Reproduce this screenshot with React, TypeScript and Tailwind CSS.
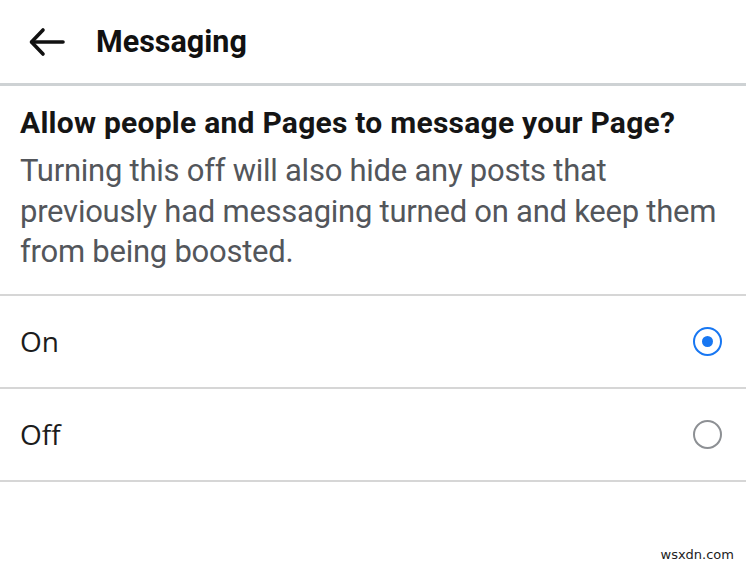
import { useState } from 'react';

const options = [
    { id: 'on', label: 'On' },
    { id: 'off', label: 'Off' },
];

const Radio = ({ checked }: { checked: boolean }) => (
    <span
        className={`w-[29px] h-[29px] rounded-full flex items-center justify-center border-2 ${checked ? 'border-[#1877f2]' : 'border-[#8d9094]'}`}
    >
        {checked && <span className="w-[11px] h-[11px] rounded-full bg-[#1877f2]" />}
    </span>
);

export default function App() {
    const [value, setValue] = useState('on');

    return (
        <div className="w-[746px] h-[570px] bg-white relative overflow-hidden font-['Roboto',sans-serif]">
            {/* Top bar */}
            <header className="h-[86px] flex items-center border-b-[3px] border-[#ced2d4]">
                <button className="ml-[26px] w-[42px] h-[42px] flex items-center justify-center text-[#111]">
                    <svg width="38" height="30" viewBox="0 0 38 30" fill="none" stroke="currentColor" strokeWidth="3.6" strokeLinecap="round" strokeLinejoin="round">
                        <path d="M35 15H4" />
                        <path d="M15 3L3.5 15 15 27" />
                    </svg>
                </button>
                <h1 className="ml-[28px] text-[30.5px] font-bold text-[#111]">Messaging</h1>
            </header>

            {/* Explainer */}
            <section className="px-5 pt-[19px] pb-[21px] border-b-2 border-[#d6d6d6]">
                <h2 className="text-[30px] leading-[36px] font-bold text-[#151515] tracking-[0.25px]">
                    Allow people and Pages to message your Page?
                </h2>
                <p className="mt-[10px] text-[31px] leading-[40.5px] text-[#53565b] tracking-[-0.25px]">
                    Turning this off will also hide any posts that previously had messaging turned on and keep them from being boosted.
                </p>
            </section>

            {/* Choices */}
            <ul>
                {options.map((opt) => (
                    <li
                        key={opt.id}
                        onClick={() => setValue(opt.id)}
                        className="h-[93px] flex items-center justify-between pl-5 pr-[24px] border-b-2 border-[#d6d6d6]"
                    >
                        <span className="text-[28px] text-[#1c1c1c] font-['Open_Sans',sans-serif]">{opt.label}</span>
                        <Radio checked={value === opt.id} />
                    </li>
                ))}
            </ul>

            <span className="absolute right-[12px] bottom-[6px] text-[13px] text-[#222] font-['DejaVu_Sans',sans-serif]">wsxdn.com</span>
        </div>
    );
}
